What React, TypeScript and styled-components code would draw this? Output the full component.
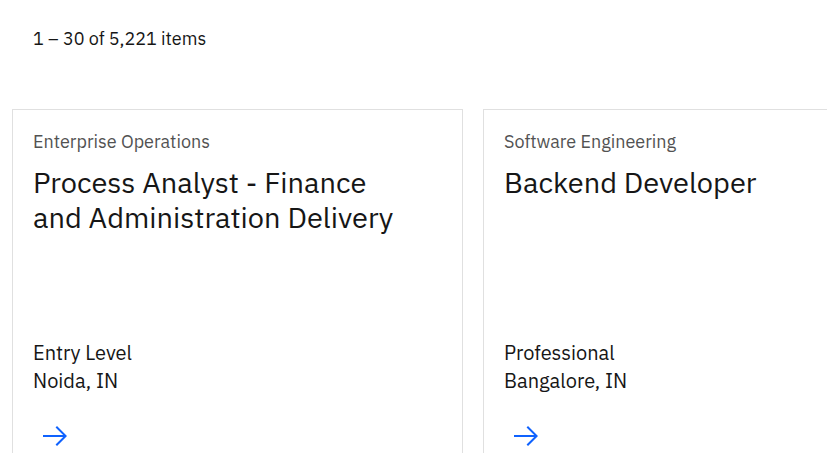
import React, { FC } from "react";
import styled, { createGlobalStyle } from "styled-components";

const GlobalStyle = createGlobalStyle`
    html, body {
        margin: 0;
        padding: 0;
        overflow: hidden;
        background: #ffffff;
    }
    body {
        font-family: "IBM Plex Sans", "Noto Sans", Roboto, sans-serif;
        color: #161616;
    }
`;

const Page = styled.div`
    width: 827px;
    height: 453px;
    overflow: hidden;
`;

const Count = styled.div`
    padding: 27px 0 0 33px;
    height: 24px;
    font-size: 18px;
    line-height: 24px;
    color: #161616;
`;

const Grid = styled.div`
    display: grid;
    grid-template-columns: repeat(2, 451px);
    column-gap: 20px;
    padding: 58px 0 0 12px;
`;

const Card = styled.a`
    display: flex;
    flex-direction: column;
    box-sizing: border-box;
    height: 360px;
    padding: 21px 20px 16px 20px;
    border: 1px solid #e0e0e0;
    text-decoration: none;
    color: inherit;
`;

const Category = styled.div`
    font-size: 18px;
    line-height: 22px;
    color: #525252;
`;

const Title = styled.h3`
    margin: 12px 0 0;
    font-size: 29px;
    font-weight: 400;
    line-height: 35px;
    color: #161616;
    max-width: 380px;
`;

const Meta = styled.div`
    margin-top: auto;
    font-size: 20px;
    line-height: 28px;
    color: #161616;
`;

const ArrowBox = styled.div`
    margin: 25px 0 0 6px;
    width: 32px;
    height: 32px;
    color: #0f62fe;
`;

type Job = { category: string; title: string; level: string; place: string };

const jobs: Job[] = [
    {
        category: "Enterprise Operations",
        title: "Process Analyst - Finance and Administration Delivery",
        level: "Entry Level",
        place: "Noida, IN",
    },
    {
        category: "Software Engineering",
        title: "Backend Developer",
        level: "Professional",
        place: "Bangalore, IN",
    },
];

const ArrowRight: FC = () => (
    <svg width="32" height="32" viewBox="0 0 32 32" fill="currentColor">
        <path d="M18 6L16.57 7.393 24.15 15 4 15 4 17 24.15 17 16.57 24.573 18 26 28 16 18 6z" />
    </svg>
);

const JobCard: FC<{ job: Job }> = ({ job }) => (
    <Card href="#">
        <Category>{job.category}</Category>
        <Title>{job.title}</Title>
        <Meta>
            {job.level}
            <br />
            {job.place}
        </Meta>
        <ArrowBox>
            <ArrowRight />
        </ArrowBox>
    </Card>
);

const App: FC = () => {
    return (
        <Page>
            <GlobalStyle />
            <Count>1 – 30 of 5,221 items</Count>
            <Grid>
                {jobs.map((job) => (
                    <JobCard key={job.title} job={job} />
                ))}
            </Grid>
        </Page>
    );
};

export default App;
